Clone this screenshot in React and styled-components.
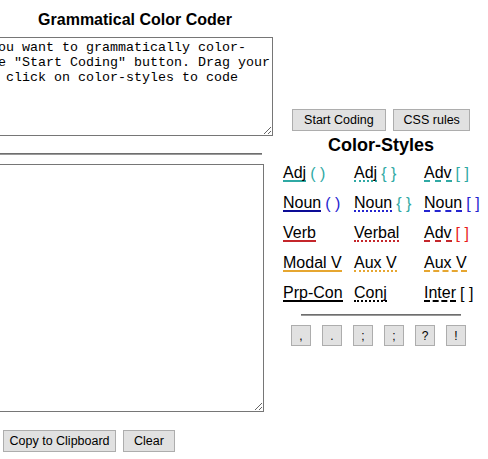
import React from 'react';
import styled, { createGlobalStyle } from 'styled-components';

const GlobalStyle = createGlobalStyle`
    html, body {
        margin: 0;
        padding: 0;
        background: #ffffff;
        font-family: 'Liberation Sans', Arial, sans-serif;
        color: #000000;
    }
`

const Page = styled.div`
    display: flex;
    align-items: flex-start;
    gap: 3px;
    margin-left: -101px;
`

const LeftColumn = styled.div`
    width: 374px;
    display: flex;
    flex-direction: column;
`

const Title = styled.h2`
    margin: 11px 0 8px;
    padding-left: 98px;
    font-size: 16px;
    line-height: 18px;
    font-weight: 700;
    text-align: center;
`

const Editor = styled.textarea`
    box-sizing: border-box;
    width: ${p => p.$width}px;
    height: ${p => p.$height}px;
    margin: 0;
    padding: 2px;
    border: 1px solid #767676;
    font-family: 'Liberation Mono', 'Courier New', monospace;
    font-size: 13.33px;
    line-height: normal;
    color: #000000;
    background: #ffffff;
    outline: none;
    overflow: hidden;
`

const Rule = styled.hr`
    box-sizing: border-box;
    width: ${p => p.$width}px;
    height: 2px;
    margin: ${p => p.$margin};
    border: 0;
    border-top: 1px solid #6e6e6e;
    border-bottom: 1px solid #9a9a9a;
    align-self: ${p => p.$align || 'flex-start'};
`

const ButtonBar = styled.div`
    display: flex;
    gap: 7px;
    padding-left: ${p => p.$indent || 0}px;
    justify-content: ${p => p.$center ? 'center' : 'flex-start'};
`

const Button = styled.button`
    box-sizing: border-box;
    height: 22px;
    padding: 0 ${p => p.$pad || 6}px;
    margin: 0;
    border: 1px solid #adadad;
    border-radius: 0;
    background: #e1e1e1;
    font-family: 'Liberation Sans', Arial, sans-serif;
    font-size: 12.5px;
    color: #000000;
`

const RightColumn = styled.div`
    width: 210px;
    padding-top: 109px;
    display: flex;
    flex-direction: column;
`

const StylesTitle = styled.h3`
    margin: 4px 0 0;
    font-size: 18px;
    line-height: 21px;
    font-weight: 700;
    text-align: center;
`

const StyleGrid = styled.div`
    display: grid;
    grid-template-columns: 71px 70px 69px;
    grid-auto-rows: 30px;
    padding-left: 7px;
    margin-top: 2px;
`

const StyleCell = styled.div`
    display: flex;
    align-items: center;
    gap: 4px;
    font-size: 16px;
    white-space: nowrap;
`

const Word = styled.span`
    display: inline-block;
    line-height: 15px;
    border-bottom: 2px ${p => p.$line} ${p => p.$color};
`

const Bracket = styled.span`
    line-height: 15px;
    color: ${p => p.$color};
`

const PunctRow = styled.div`
    display: flex;
    gap: 11px;
    padding-left: 15px;
`

const PunctButton = styled.button`
    box-sizing: border-box;
    width: 20px;
    height: 21px;
    padding: 0;
    margin: 0;
    border: 1px solid #adadad;
    background: #e1e1e1;
    font-family: 'Liberation Sans', Arial, sans-serif;
    font-size: 12px;
    color: #000000;
`

const TEAL = '#2fa9a4';
const BLUE = '#2424d0';
const NAVY = '#0c0c96';
const RED = '#c4262b';
const BRIGHT_RED = '#e81c1c';
const ORANGE = '#e6a630';

const styles = [
    { word: 'Adj', line: 'solid', color: TEAL, bracket: '( )', bColor: TEAL },
    { word: 'Adj', line: 'dotted', color: TEAL, bracket: '{ }', bColor: TEAL },
    { word: 'Adv', line: 'dashed', color: TEAL, bracket: '[ ]', bColor: TEAL },
    { word: 'Noun', line: 'solid', color: NAVY, bracket: '( )', bColor: BLUE },
    { word: 'Noun', line: 'dotted', color: BLUE, bracket: '{ }', bColor: TEAL },
    { word: 'Noun', line: 'dashed', color: BLUE, bracket: '[ ]', bColor: BLUE },
    { word: 'Verb', line: 'solid', color: RED },
    { word: 'Verbal', line: 'dotted', color: RED },
    { word: 'Adv', line: 'dashed', color: RED, bracket: '[ ]', bColor: BRIGHT_RED },
    { word: 'Modal V', line: 'solid', color: ORANGE },
    { word: 'Aux V', line: 'dotted', color: ORANGE },
    { word: 'Aux V', line: 'dashed', color: ORANGE },
    { word: 'Prp-Con', line: 'solid', color: '#000000' },
    { word: 'Conj', line: 'dotted', color: '#000000' },
    { word: 'Inter', line: 'dashed', color: '#000000', bracket: '[ ]', bColor: '#000000' },
];

const punctuation = [',', '.', ';', ';', '?', '!'];

const intro = 'Paste text you want to grammatically color-\n' +
    'code. Use the "Start Coding" button. Drag your\n' +
    'cursor, then click on color-styles to code';

export default function App() {
    return (
        <>
            <GlobalStyle/>
            <Page>
                <LeftColumn>
                    <Title>Grammatical Color Coder</Title>
                    <Editor $width={374} $height={99} defaultValue={intro} spellCheck={false}/>
                    <Rule $width={363} $margin="17px 0 0"/>
                    <Editor $width={365} $height={248} style={{ marginTop: 9 }} spellCheck={false}/>
                    <ButtonBar $indent={104} style={{ marginTop: 18 }}>
                        <Button $pad={5.5}>Copy to Clipboard</Button>
                        <Button $pad={10}>Clear</Button>
                    </ButtonBar>
                </LeftColumn>
                <RightColumn>
                    <ButtonBar $center>
                        <Button $pad={11.5}>Start Coding</Button>
                        <Button $pad={9.5}>CSS rules</Button>
                    </ButtonBar>
                    <StylesTitle>Color-Styles</StylesTitle>
                    <StyleGrid>
                        {styles.map((s, i) => (
                            <StyleCell key={i}>
                                <Word $line={s.line} $color={s.color}>{s.word}</Word>
                                {s.bracket && <Bracket $color={s.bColor}>{s.bracket}</Bracket>}
                            </StyleCell>
                        ))}
                    </StyleGrid>
                    <Rule $width={160} $margin="6px 0 0" $align="center"/>
                    <PunctRow style={{ marginTop: 9 }}>
                        {punctuation.map((p, i) => <PunctButton key={i}>{p}</PunctButton>)}
                    </PunctRow>
                </RightColumn>
            </Page>
        </>
    );
}
